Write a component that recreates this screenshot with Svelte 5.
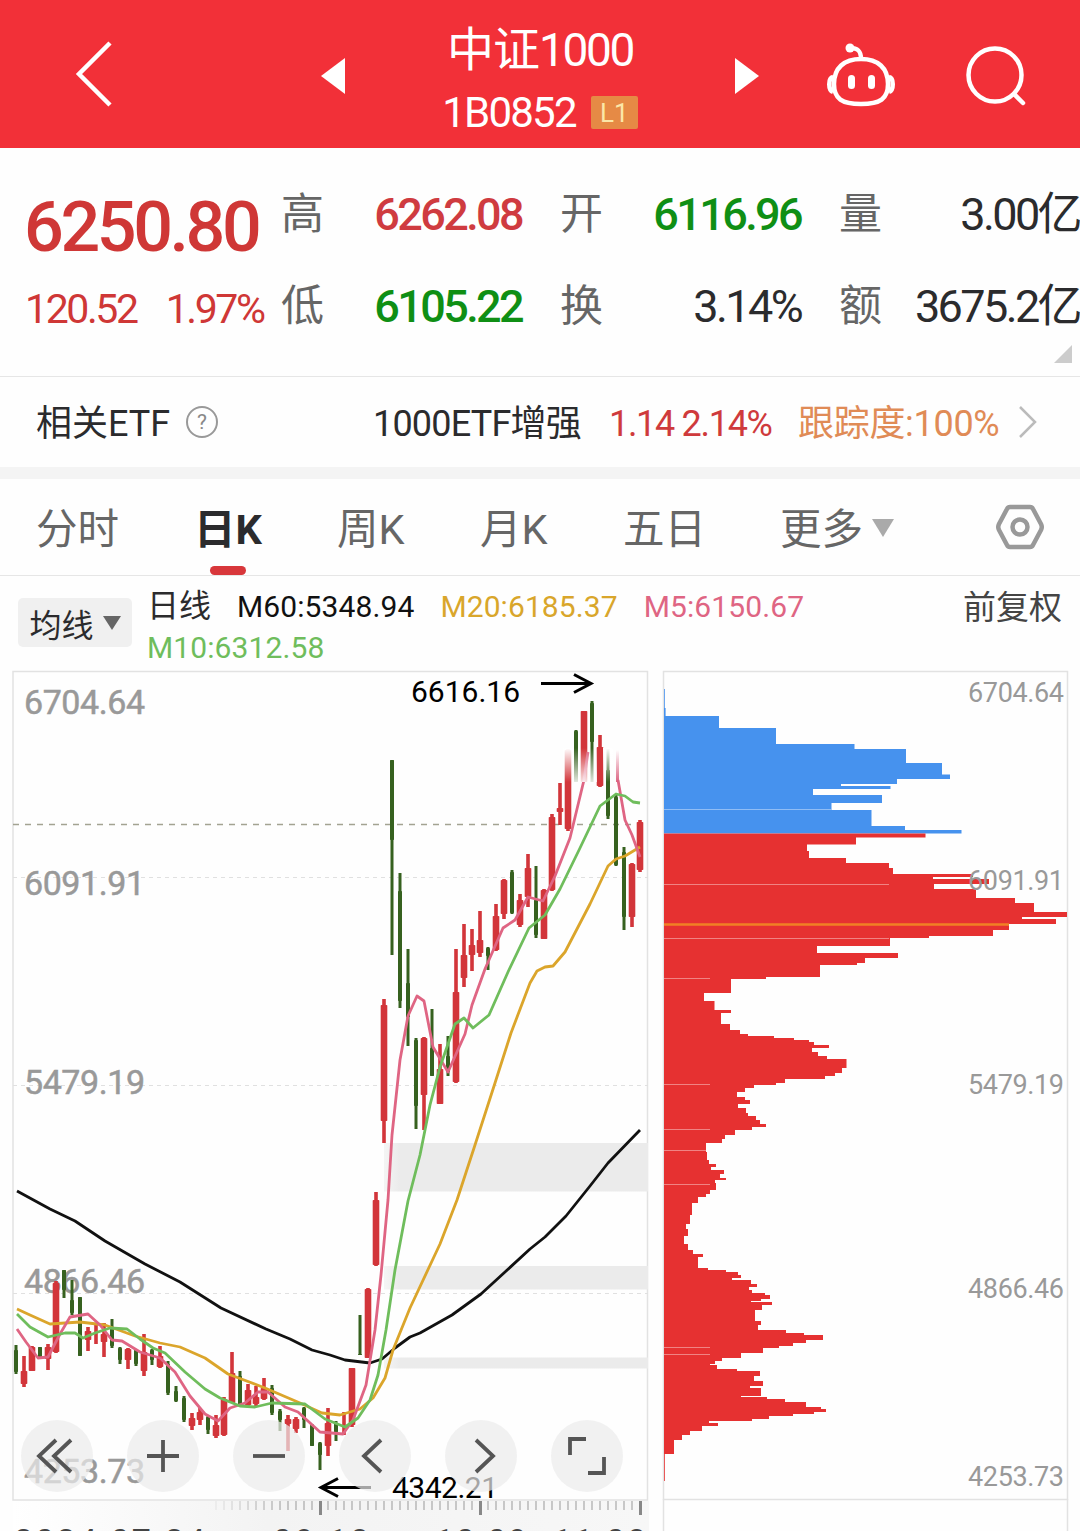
<script>
    let activo = $state('日K');

    const tabs = ['分时', '日K', '周K', '月K', '五日', '更多'];

    const quotes = [
        { label: '高', value: '6262.08', color: 'up' },
        { label: '开', value: '6116.96', color: 'down' },
        { label: '量', value: '3.00亿', color: 'flat' },
        { label: '低', value: '6105.22', color: 'down' },
        { label: '换', value: '3.14%', color: 'flat' },
        { label: '额', value: '3675.2亿', color: 'flat' },
    ];

    // [up, high, low, body top, body bottom], one every 8px
    const candles = [
        [0, 1345, 1374, 1350, 1372], [1, 1356, 1387, 1371, 1384], [1, 1346, 1371, 1347, 1371], [0, 1347, 1357, 1347, 1357],
        [1, 1344, 1370, 1347, 1359], [1, 1281, 1353, 1283, 1352], [0, 1270, 1298, 1270, 1290], [0, 1280, 1315, 1300, 1313],
        [0, 1297, 1356, 1297, 1356], [1, 1327, 1351, 1331, 1340], [1, 1323, 1344, 1340, 1340], [1, 1323, 1357, 1334, 1342],
        [0, 1319, 1348, 1328, 1346], [0, 1347, 1364, 1348, 1360], [1, 1348, 1369, 1349, 1360], [0, 1350, 1366, 1350, 1364],
        [1, 1334, 1376, 1352, 1371], [0, 1349, 1365, 1350, 1360], [1, 1346, 1368, 1356, 1367], [0, 1361, 1395, 1364, 1393],
        [0, 1386, 1402, 1391, 1401], [0, 1396, 1422, 1398, 1420], [1, 1413, 1430, 1418, 1426], [1, 1408, 1425, 1412, 1420],
        [0, 1416, 1434, 1417, 1430], [1, 1415, 1438, 1425, 1436], [1, 1397, 1436, 1399, 1435], [1, 1352, 1403, 1373, 1403],
        [0, 1371, 1405, 1376, 1405], [1, 1384, 1406, 1390, 1405], [1, 1386, 1406, 1397, 1404], [1, 1378, 1400, 1388, 1399],
        [0, 1385, 1415, 1388, 1413], [0, 1409, 1431, 1411, 1420], [1, 1415, 1451, 1419, 1424], [1, 1417, 1433, 1419, 1429],
        [0, 1407, 1428, 1408, 1420], [0, 1424, 1446, 1425, 1446], [0, 1442, 1470, 1443, 1455], [1, 1408, 1456, 1423, 1446],
        [0, 1421, 1441, 1423, 1432], [1, 1412, 1435, 1434, 1434], [1, 1368, 1427, 1368, 1425], [0, 1315, 1355, 1354, 1355],
        [1, 1288, 1358, 1289, 1358], [1, 1192, 1266, 1200, 1265], [1, 999, 1143, 1005, 1121], [0, 760, 955, 760, 840],
        [0, 873, 1008, 891, 1001], [0, 949, 1046, 983, 1017], [0, 1038, 1129, 1040, 1106], [1, 1037, 1130, 1038, 1095],
        [0, 1009, 1076, 1048, 1076], [1, 1044, 1104, 1069, 1104], [0, 1036, 1076, 1056, 1072], [1, 949, 1083, 992, 1082],
        [1, 924, 987, 955, 978], [1, 929, 971, 945, 955], [1, 911, 957, 940, 953], [0, 947, 970, 948, 956],
        [1, 904, 951, 916, 950], [1, 879, 919, 880, 914], [0, 870, 914, 872, 913], [1, 894, 927, 900, 925],
        [1, 854, 907, 868, 897], [0, 866, 938, 900, 935], [1, 889, 939, 890, 939], [1, 814, 891, 817, 890],
        [1, 783, 825, 808, 812], [1, 749, 831, 750, 829], [0, 730, 782, 731, 782], [1, 711, 782, 711, 782],
        [0, 701, 782, 703, 742], [1, 735, 787, 747, 786], [0, 749, 819, 770, 816], [0, 795, 866, 797, 865],
        [0, 847, 930, 852, 917], [1, 863, 927, 864, 917], [1, 820, 872, 822, 870],
    ];

    const ma60 = '17,1191 50,1209 75,1221 105,1241 145,1264 180,1282 221,1308 266,1329 290,1339 312,1350 330,1355 345,1360 370,1363 382,1359 395,1348 410,1337 420,1333 452,1315 481,1294 505,1272 530,1249 545,1237 566,1216 590,1186 608,1163 640,1130';
    const ma20 = '17,1309 30,1315 50,1324 80,1322 105,1325 135,1336 160,1343 180,1347 205,1358 228,1374 265,1388 300,1403 322,1413 340,1415 360,1409 373,1398 385,1378 393,1350 410,1308 440,1244 457,1200 475,1145 495,1083 511,1033 530,983 537,971 545,967 553,966 565,952 590,904 608,866 616,859 625,856 640,847';
    const ma10 = '17,1314 30,1327 48,1337 65,1333 75,1333 83,1338 95,1333 110,1328 127,1329 140,1339 153,1348 165,1353 185,1372 205,1389 220,1398 240,1406 255,1407 272,1403 305,1404 325,1419 345,1427 358,1418 370,1400 378,1375 386,1330 395,1270 408,1201 420,1155 430,1105 440,1067 455,1024 464,1018 473,1028 489,1015 508,972 529,928 545,915 560,889 580,848 600,806 616,794 625,796 633,802 640,803';
    const ma5 = '17,1329 26,1342 38,1358 48,1357 60,1334 70,1317 88,1314 100,1325 112,1340 122,1341 140,1352 160,1358 175,1372 190,1396 205,1414 218,1421 230,1408 245,1403 258,1392 268,1392 285,1407 298,1412 320,1432 343,1434 353,1420 366,1385 375,1330 381,1275 388,1200 392,1135 400,1060 408,1016 417,996 424,1001 433,1047 448,1072 465,1034 472,1005 485,969 503,928 515,920 528,897 543,901 555,876 570,838 584,780 588,752';

    // chip distribution steps: [y, right edge]
    const blueSteps = [
        [689, 664.8], [708, 665.6], [716, 719], [728, 776], [744, 854.5], [749, 906], [763, 942], [774.5, 950], [779, 897], [784, 841],
        [786, 890.5], [789, 813], [795, 882], [803, 831.5], [810, 871.5], [826, 905], [830, 961.5], [833.5, 664],
    ];
    const redSteps = [
        [833.5, 925.5], [837.5, 856], [844.5, 807], [851, 809], [858, 846], [863, 889], [868, 893], [874, 973], [877, 933], [879, 989],
        [884, 934], [889, 976], [898, 1015], [903, 1034], [912, 1067], [917, 1022], [919, 1056], [924, 1009], [930, 993], [936, 929],
        [938, 890], [946, 817], [953, 898], [958, 865], [963, 857], [965, 820], [977, 766], [979, 731], [993, 704], [1001, 714.5],
        [1010, 731], [1013, 721], [1024, 730], [1030, 740], [1034, 748], [1036, 774], [1038, 794], [1040, 809], [1042, 814], [1045, 829],
        [1048, 812], [1052, 818], [1056, 827], [1059, 846.5], [1068, 842], [1073, 835], [1076, 825], [1079, 785], [1083, 776], [1085, 754],
        [1088, 745], [1092, 737], [1097, 745], [1100, 750], [1104, 738], [1108, 746], [1113, 748], [1116, 756], [1120, 760], [1124, 766],
        [1127, 752], [1130, 735], [1135, 725], [1139, 722], [1143, 706], [1152, 707], [1160, 709], [1164, 716], [1167, 711], [1170, 724],
        [1174, 720], [1178, 726], [1180, 715], [1183, 716], [1190, 710], [1194, 706], [1197, 698], [1203, 692], [1215, 690], [1224, 686],
        [1229, 688], [1236, 684], [1244, 688], [1250, 693], [1254, 703], [1257, 698], [1268, 708], [1270, 726], [1272, 738], [1275, 741],
        [1278, 732], [1280, 751], [1284, 757], [1287, 749], [1290, 752], [1293, 765], [1295, 770], [1299, 761], [1301, 751], [1302, 772],
        [1305, 762], [1310, 755], [1321, 761], [1325, 758], [1330, 786], [1333, 804], [1335, 823], [1340, 806], [1343, 793], [1346, 779],
        [1348, 763], [1353, 741], [1358, 722], [1361, 715], [1364, 710], [1365, 717], [1369, 737], [1371, 760], [1376, 754], [1381, 763],
        [1386, 750], [1388, 761], [1396, 741], [1397, 767], [1399, 785], [1402, 806], [1407, 821], [1409, 826], [1412, 814], [1414, 793],
        [1416, 769], [1419, 752], [1421, 709], [1423, 718], [1426, 702], [1431, 690], [1435, 682], [1440, 674], [1454, 664.8], [1481, 664],
    ];

    function stepPath(steps) {
        let d = `M664 ${steps[0][0]}`;
        for (const [y, x] of steps) {
            d += `V${y}H${x}`;
        }
        return d + 'H664Z';
    }

    const ticks = Array.from({ length: 54 }, (_, i) => 216 + i * 8);
    const leftLabels = [['6704.64', 714], ['6091.91', 895], ['5479.19', 1094], ['4866.46', 1293], ['4253.73', 1483]];
    const rightLabels = [['6704.64', 702], ['6091.91', 890], ['5479.19', 1094], ['4866.46', 1298], ['4253.73', 1486]];
    const seams = [809, 884, 938, 978, 1084, 1129, 1150, 1184, 1347, 1354];
    const dates = [['2024-07-24', 14, 191], ['09-18', 273, 96], ['10-09', 435, 92], ['11-08', 553, 93]];

    const controls = [
        'M56 1440 39 1456 56 1472M71 1440 54 1456 71 1472',
        'M163 1440V1472M147 1456H179',
        'M253 1456H285',
        'M381 1440 364 1456 381 1472',
        'M476 1440 493 1456 476 1472',
        'M570 1455V1439H586M604 1457V1473H588',
    ];
</script>

<div class="app">
    <header class="header">
        <svg class="back" viewBox="0 0 40 66"><path d="M37 2 6 33 37 64" /></svg>
        <svg class="prev" viewBox="0 0 24 36"><path d="M24 0V36L0 18Z" /></svg>
        <div class="names">
            <div class="name">中证<span>1000</span></div>
            <div class="code">1B0852<span class="level">L1</span></div>
        </div>
        <svg class="next" viewBox="0 0 24 36"><path d="M0 0V36L24 18Z" /></svg>
        <svg class="robot" viewBox="0 0 72 66">
            <path d="M36 16C53 16 63 25 63 41C63 56 55 61 36 61C17 61 9 56 9 41C9 25 19 16 36 16ZM36 16C36 8 33 5 25 5M8 34C3 35 3 47 8 49M64 34C69 35 69 47 64 49" />
            <circle cx="25" cy="5" r="4.5" />
            <rect x="23" y="32" width="7" height="14" rx="3.5" />
            <rect x="43" y="32" width="7" height="14" rx="3.5" />
        </svg>
        <svg class="search" viewBox="0 0 64 64"><circle cx="30" cy="30" r="26.5" /><path d="M49 49 58 58" /></svg>
    </header>

    <section class="quote">
        <div class="main">
            <div class="price">6250.80</div>
            <div class="change"><span>120.52</span><span>1.97%</span></div>
        </div>
        <div class="grid">
            {#each quotes as q}
                <div class="cell"><span class="label">{q.label}</span><span class="value {q.color}">{q.value}</span></div>
            {/each}
        </div>
        <span class="corner"></span>
    </section>

    <section class="etf">
        <span class="etf-title">相关ETF</span>
        <span class="help">?</span>
        <span class="etf-name">1000ETF增强</span>
        <span class="etf-num">1.14 2.14%</span>
        <span class="track">跟踪度:100%</span>
        <svg class="go" viewBox="0 0 20 34"><path d="M2 2 17 17 2 32" /></svg>
    </section>

    <nav class="tabs">
        {#each tabs as tab}
            <button class="tab" class:activo={activo === tab} onclick={() => activo = tab}>
                {tab}{#if tab === '更多'}<i class="caret"></i>{/if}
            </button>
        {/each}
        <svg class="settings" viewBox="0 0 50 46">
            <path d="M15 3H35Q37 3 38 5L46 20Q47.500 23 46 26L38 41Q37 43 35 43H15Q13 43 12 41L4 26Q2.500 23 4 20L12 5Q13 3 15 3Z" />
            <circle cx="25" cy="23" r="7.500" />
        </svg>
    </nav>

    <section class="legend">
        <button class="ma">均线<i></i></button>
        <div class="series">
            <span class="day">日线</span>
            <span class="m60">M60:5348.94</span>
            <span class="m20">M20:6185.37</span>
            <span class="m5">M5:6150.67</span>
            <span class="m10">M10:6312.58</span>
        </div>
        <span class="adjust">前复权</span>
    </section>

    <section class="charts">
        <svg class="kline" viewBox="0 670 656 861">
            <defs>
                <linearGradient id="fadeDown" x1="0" y1="0" x2="0" y2="1"><stop offset="0" stop-color="#fff" /><stop offset="1" stop-color="#fff" stop-opacity="0" /></linearGradient>
                <linearGradient id="fadeUp" x1="0" y1="0" x2="0" y2="1"><stop offset="0" stop-color="#fff" stop-opacity="0" /><stop offset="1" stop-color="#fff" stop-opacity=".85" /></linearGradient>
                <linearGradient id="axisBg"><stop offset="0" stop-color="#fff" /><stop offset=".4" stop-color="#f3f3f3" /><stop offset="1" stop-color="#f7f7f7" /></linearGradient>
                <linearGradient id="gapFade"><stop offset="0" stop-color="#ebebeb" stop-opacity=".5" /><stop offset=".06" stop-color="#ebebeb" /></linearGradient>
                <linearGradient id="pinkFade" x1="0" y1="0" x2="0" y2="1"><stop offset="0" stop-color="#dc6482" stop-opacity="0" /><stop offset="1" stop-color="#dc6482" /></linearGradient>
            </defs>
            <rect x="13" y="1501" width="636" height="30" fill="url(#axisBg)" />
            <rect class="frame" x="13" y="671.500" width="634.500" height="828.500" />
            <rect x="384" y="1143" width="264" height="48.500" fill="url(#gapFade)" />
            <rect x="384" y="1266" width="264" height="23.500" fill="url(#gapFade)" />
            <rect x="384" y="1357.500" width="264" height="11" fill="url(#gapFade)" />
            <path class="dash" d="M13 877.500H648M13 1085.500H648M13 1293.500H648" />
            <path class="last" d="M13 824.500H648" />
            {#each leftLabels as [text, y]}
                <text class="axis-left" x="24" {y} textLength="121">{text}</text>
            {/each}
            {#each candles as [up, high, low, top, bottom], i}
                <g fill={up ? '#d2353a' : '#36611f'}>
                    <rect x={up ? 14.2 + i * 8 : 14.5 + i * 8} y={high} width={up ? 3.6 : 3} height={low - high} />
                    <rect x={up ? 12.7 + i * 8 : 14 + i * 8} y={top} width={up ? 6.6 : 4} height={bottom - top} rx="0.800" />
                </g>
            {/each}
            <polyline class="line" points={ma60} stroke="#111" />
            <polyline class="line" points={ma20} stroke="#dba52b" />
            <polyline class="line" points={ma5} stroke="#df6583" />
            <path class="line" d="M618 780 625 820 632 835 640 857" stroke="#df6583" />
            <polyline class="line" points={ma10} stroke="#6fbd5c" />
            <rect x="563" y="748" width="10" height="34" fill="url(#fadeDown)" />
            <rect x="574" y="748" width="23" height="34" fill="url(#fadeUp)" />
            <rect x="603" y="748" width="10" height="34" fill="url(#fadeDown)" />
            <rect x="616" y="750" width="3" height="32" fill="url(#pinkFade)" />
            <text class="mark" x="411" y="702" textLength="109">6616.16</text>
            <path class="arrow" d="M541 683.500H591M574 674.500 591 683.500 574 692.500" />
            <text class="mark" x="392" y="1498" textLength="106">4342.21</text>
            <path class="arrow" d="M371 1487.500H321M338 1478.500 321 1487.500 338 1496.500" />
            {#each ticks as x}
                <path class="tick" d="M{x} 1501V1510" opacity={Math.min(1, (x - 200) / 80)} />
            {/each}
            <path class="major" d="M320.500 1501V1515M480.500 1501V1515M640.500 1501V1515" />
            {#each dates as [text, x, w]}
                <text class="date" {x} y="1553" textLength={w}>{text}</text>
            {/each}
            {#each controls as d, i}
                <circle class="round" cx={57 + i * 106} cy="1456" r="36" />
                <path class="glyph" {d} />
            {/each}
        </svg>

        <svg class="chips" viewBox="656 670 424 861">
            <rect class="frame" x="663.500" y="671.500" width="404" height="828" />
            <path class="frame" d="M663.500 1499V1531M1067.500 1499V1531" />
            <path d={stepPath(blueSteps)} fill="#4692ee" />
            <path d={stepPath(redSteps)} fill="#e63131" />
            {#each seams as y}
                <path class="seam" d="M664 {y}.5H{y === 809 ? 831 : y < 960 ? 889 : 710}" />
            {/each}
            <path d="M664 924.500H1009" stroke="#f08024" stroke-width="2.500" />
            {#each rightLabels as [text, y]}
                <text class="axis-right" x="968" {y} textLength="96">{text}</text>
            {/each}
        </svg>
    </section>
</div>

<style>
    :global(body) {
        margin: 0;
        background: #fff;
    }

    .app {
        width: 1080px;
        height: 1531px;
        overflow: hidden;
        background: #fefefe;
        color: #2b2b2d;
        font-family: Roboto, "Noto Sans CJK SC", sans-serif;
    }

    svg {
        display: block;
        flex: none;
        fill: none;
    }

    button {
        border: 0;
        background: none;
        padding: 0;
        font: inherit;
        color: inherit;
        white-space: nowrap;
    }

    .header {
        height: 148px;
        box-sizing: border-box;
        background: #f23038;
        color: #fff;
        display: flex;
        align-items: center;
        padding-left: 73px;
    }

    .back {
        width: 40px;
        height: 66px;
        stroke: #fff;
        stroke-width: 4.500;
    }

    .prev, .next {
        width: 24px;
        height: 36px;
        fill: #fff;
        margin-top: 4px;
    }

    .prev {
        margin-left: 208px;
    }

    .names {
        width: 390px;
        display: flex;
        flex-direction: column;
        align-items: center;
        margin-top: 10px;
    }

    .name {
        height: 66px;
        line-height: 66px;
        font-size: 47px;
        letter-spacing: -1px;
    }

    .name span {
        font-size: 46px;
        letter-spacing: -2.400px;
    }

    .code {
        height: 58px;
        display: flex;
        align-items: center;
        font-size: 42px;
        letter-spacing: -1.800px;
    }

    .level {
        width: 47px;
        height: 33px;
        line-height: 34px;
        margin-left: 15px;
        background: #e68a45;
        border-radius: 2px;
        text-align: center;
        font-size: 26px;
        letter-spacing: 0;
        color: #fbe7a8;
    }

    .robot {
        width: 72px;
        height: 66px;
        margin-left: 66px;
        margin-top: 3px;
        stroke: #fff;
        stroke-width: 4.500;
    }

    .robot circle, .robot rect {
        fill: #fff;
        stroke: none;
    }

    .search {
        width: 64px;
        height: 64px;
        margin-left: 68px;
        margin-top: 5px;
        stroke: #fff;
        stroke-width: 4.500;
        stroke-linecap: round;
    }

    .quote {
        position: relative;
        height: 228px;
        border-bottom: 1px solid #e6e6e6;
        display: flex;
    }

    .main {
        width: 281px;
        box-sizing: border-box;
        padding: 42px 0 0 24px;
        color: #cf3736;
        white-space: nowrap;
    }

    .price {
        height: 74px;
        line-height: 74px;
        font-size: 70px;
        font-weight: 500;
        letter-spacing: -3.400px;
    }

    .change {
        display: flex;
        gap: 29px;
        padding-left: 1px;
        line-height: 90px;
        font-size: 41px;
        letter-spacing: -2.400px;
    }

    .grid {
        display: grid;
        grid-template-columns: repeat(3, 241px);
        grid-auto-rows: 92px;
        column-gap: 38px;
        padding-top: 20px;
    }

    .cell {
        display: flex;
        justify-content: space-between;
        line-height: 93px;
        white-space: nowrap;
    }

    .label {
        font-size: 43px;
        color: #666;
    }

    .value {
        font-size: 45px;
        font-weight: 500;
        letter-spacing: -2.600px;
    }

    .up {
        color: #cf3b40;
    }

    .down {
        color: #0f8f14;
    }

    .flat {
        font-weight: 400;
    }

    .corner {
        position: absolute;
        right: 8px;
        bottom: 13px;
        border: 9px solid transparent;
        border-right-color: #ccc;
        border-bottom-color: #ccc;
    }

    .etf {
        height: 90px;
        box-sizing: content-box;
        border-bottom: 12px solid #f4f4f4;
        display: flex;
        padding-left: 36px;
        font-size: 36px;
        white-space: nowrap;
        line-height: 95px;
    }

    .etf-title {
        width: 150px;
    }

    .help {
        width: 28px;
        height: 28px;
        line-height: 29px;
        border: 2px solid #999;
        border-radius: 50%;
        text-align: center;
        font-size: 21px;
        color: #888;
        margin-top: 29px;
    }

    .etf-name {
        width: 236px;
        margin-left: 155px;
        letter-spacing: -.800px;
    }

    .etf-num {
        width: 189px;
        color: #cf3a3c;
        letter-spacing: -1.300px;
    }

    .track {
        width: 220px;
        color: #e08b56;
        letter-spacing: -.3px;
    }

    .go {
        width: 20px;
        height: 34px;
        margin-top: 28px;
        stroke: #bbb;
        stroke-width: 2.500;
    }

    .tabs {
        height: 96px;
        border-bottom: 1px solid #e6e6e6;
        display: flex;
        padding-left: 36px;
    }

    .tab {
        position: relative;
        width: 143px;
        text-align: left;
        font-size: 41.500px;
        color: #666;
        line-height: 101px;
    }

    .tab:first-child {
        width: 158px;
    }

    .tab:nth-child(5) {
        width: 157px;
    }

    .tab:nth-child(6) {
        width: 215px;
    }

    .tab.activo {
        font-weight: 700;
        color: #2b2b2d;
    }

    .activo::after {
        content: "";
        position: absolute;
        left: 16px;
        bottom: 0;
        width: 36px;
        height: 9px;
        border-radius: 5px;
        background: #d8373b;
    }

    .caret {
        display: inline-block;
        border: 11px solid transparent;
        border-top: 18px solid #aaa;
        border-bottom: 0;
        margin: 0 0 7px 9px;
    }

    .settings {
        width: 50px;
        height: 46px;
        margin: 25px 0 0 0;
        stroke: #999;
        stroke-width: 4.500;
    }

    .legend {
        height: 94px;
        display: flex;
        padding-left: 18px;
        font-size: 30px;
        white-space: nowrap;
    }

    .ma {
        width: 114px;
        height: 49px;
        margin-top: 22px;
        border-radius: 5px;
        background: #f0f0f0;
        font-size: 32px;
        line-height: 56px;
    }

    .ma i {
        display: inline-block;
        border: 9px solid transparent;
        border-top: 14px solid #666;
        border-bottom: 0;
        margin: 0 0 7px 9px;
    }

    .series {
        width: 831px;
        box-sizing: border-box;
        padding: 10px 60px 0 15px;
        display: flex;
        flex-wrap: wrap;
        align-content: flex-start;
        column-gap: 26px;
        line-height: 41px;
        letter-spacing: .1px;
    }

    .day, .adjust {
        font-size: 32px;
        letter-spacing: 0;
    }

    .adjust {
        font-size: 33px;
        line-height: 64px;
        color: #444;
    }

    .m60 {
        color: #111;
    }

    .m20 {
        color: #d9a62b;
    }

    .m5 {
        color: #df6583;
    }

    .m10 {
        color: #6fbd5c;
        flex-basis: 100%;
    }

    .charts {
        display: flex;
        height: 861px;
    }

    .kline {
        width: 656px;
        height: 861px;
    }

    .chips {
        width: 424px;
        height: 861px;
    }

    .frame {
        stroke: #e2e2e2;
        stroke-width: 1.500;
    }

    .dash {
        stroke: #e0e0e0;
        stroke-dasharray: 4 4;
    }

    .last {
        stroke: #a3a392;
        stroke-width: 1.500;
        stroke-dasharray: 6 6;
    }

    .line {
        stroke-width: 2.800;
        stroke-linejoin: round;
    }

    .axis-left {
        fill: #999;
        stroke: #999;
        stroke-width: .5;
        font-size: 34px;
    }

    .axis-right {
        fill: #999;
        font-size: 27px;
    }

    .mark {
        fill: #000;
        font-size: 30px;
    }

    .arrow {
        stroke: #000;
        stroke-width: 3;
    }

    .tick {
        stroke: #999;
    }

    .major {
        stroke: #888;
        stroke-width: 3;
    }

    .date {
        fill: #444;
        font-size: 34px;
    }

    .round {
        fill: #ebebeb;
        fill-opacity: .7;
    }

    .glyph {
        stroke: #555;
        stroke-width: 3.800;
    }

    .seam {
        stroke: #fff;
        stroke-opacity: .4;
    }
</style>
